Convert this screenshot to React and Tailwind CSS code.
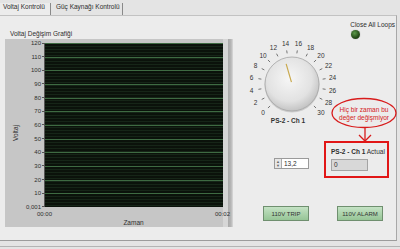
const yLabels = ['120', '110', '100', '90', '80', '70', '60', '50', '40', '30', '20', '10', '0,001']

function Dial() {
  const cx = 52
  const cy = 48
  const marks = []
  for (let v = 0; v <= 30; v += 2) {
    const a = ((-135 + v * 9) * Math.PI) / 180
    const s = Math.sin(a)
    const c = Math.cos(a)
    marks.push(
      <g key={v}>
        <line x1={cx + 31 * s} y1={cy - 31 * c} x2={cx + 34 * s} y2={cy - 34 * c} stroke="#555" strokeWidth="0.8" />
        <text x={cx + 41 * s} y={cy - 41 * c + 2.5} textAnchor="middle" fontSize="6.5" fill="#333">{v}</text>
      </g>
    )
  }
  const pa = ((-135 + 13.2 * 9) * Math.PI) / 180
  return (
    <svg width="110" height="92" viewBox="0 0 110 92">
      <defs>
        <radialGradient id="knob" cx="45%" cy="40%" r="60%">
          <stop offset="0%" stopColor="#f6f6f6" />
          <stop offset="70%" stopColor="#e2e2e2" />
          <stop offset="100%" stopColor="#c4c4c4" />
        </radialGradient>
      </defs>
      {marks}
      <circle cx={cx} cy={cy + 1} r="27.5" fill="#b8b8b8" opacity="0.6" />
      <circle cx={cx} cy={cy} r="27" fill="url(#knob)" stroke="#a6a6a6" strokeWidth="0.8" />
      <line x1={cx + 2 * Math.sin(pa)} y1={cy - 2 * Math.cos(pa)} x2={cx + 21 * Math.sin(pa)} y2={cy - 21 * Math.cos(pa)} stroke="#c9a94e" strokeWidth="1.2" />
      <text x={cx - 4} y="87" textAnchor="middle" fontSize="6.5" fontWeight="bold" fill="#333">PS-2 - Ch 1</text>
    </svg>
  )
}

export default function App() {
  return (
    <div className="relative w-[400px] h-[249px] overflow-hidden bg-[#e4e4e4] font-['Liberation_Sans',Arial,sans-serif] text-[6.5px] leading-[8px] text-[#2e2e2e]">
      {/* tabs */}
      <div className="flex h-[15px] items-end">
        <div className="pl-[3px] pr-[5px] h-[12px] border-r border-[#8a8a8a] bg-[#ececec]">Voltaj Kontrolü</div>
        <div className="pl-[5px] pr-[2px] h-[12px] border-r border-[#8a8a8a]">Güç Kaynağı Kontrolü</div>
      </div>

      {/* panel */}
      <div className="flex h-[226px] border-t border-[#c2c2c2] border-b border-b-[#9c9c9c] border-r border-r-[#a8a8a8] bg-[#ececec] mr-[3px]">
        <div className="w-[235px] pl-[5px] shrink-0">
          <div className="ml-[5px] mt-[14px] h-[8px]">Voltaj Değişim Grafiği</div>
          <div className="mt-[1px] flex w-[228px] h-[188px] bg-[#c6c6c6]">
            <div className="flex w-[39px] shrink-0">
              <div className="w-[24px] flex items-center justify-center">
                <span className="-rotate-90">Voltaj</span>
              </div>
              <div className="flex-1 mt-[4px] h-[164px] flex flex-col justify-between items-end">
                {yLabels.map(l => (
                  <div key={l} className="h-0 flex items-center gap-[1px] text-[6px]">
                    <span>{l}</span>
                    <span className="w-[2px] h-px bg-[#555]" />
                  </div>
                ))}
              </div>
            </div>
            <div className="w-[179px] shrink-0">
              <div className="mt-[4px] h-[164px] bg-[#0b120b] bg-[repeating-linear-gradient(to_bottom,#3e6a42_0_1px,transparent_1px_13.67px),repeating-linear-gradient(to_bottom,#21382480_0_1px,#0b120b_1px_3px)] border-l border-[#555]" />
              <div className="relative z-10 flex justify-between -mx-[7px] mt-[3px] text-[6px]">
                <span>00:00</span>
                <span>00:02</span>
              </div>
              <div className="text-center mt-[1px]">Zaman</div>
            </div>
            <div className="flex-1 bg-[linear-gradient(to_right,#d6d6d6,#d6d6d6_45%,#a9a9a9_50%,#b6b6b6_80%,#dadada)]" />
          </div>
        </div>

        <div className="flex-1 flex flex-col">
          <div className="flex items-start h-[110px]">
            <div className="ml-[5px] mt-[20px]">
              <Dial />
            </div>
            <div className="ml-auto mr-[1px] mt-[5px] flex flex-col items-start whitespace-nowrap">
              <span>Close All Loops</span>
              <span className="ml-[1px] mt-[1px] w-[9px] h-[9px] rounded-full bg-[radial-gradient(circle_at_40%_35%,#5c9a4a,#244a18_60%,#1a3412)] shadow-[0_0_1px_#777]" />
            </div>
          </div>

          <div className="flex items-start mt-[15px]">
            <div className="ml-[39px] mt-[17px] flex h-[11px] w-[35px] border border-[#9a9a9a] bg-white">
              <div className="w-[7px] flex flex-col items-center justify-center bg-[#e6e6e6] border-r border-[#aaa] text-[4px] leading-[4px] text-[#666]">
                <span>▲</span>
                <span>▼</span>
              </div>
              <span className="pl-[2px] leading-[10px]">13,2</span>
            </div>
            <div className="ml-[15px] w-[65px] h-[37px] border-2 border-[#e11616] pl-[5px] pt-[5px]">
              <div className="whitespace-nowrap"><b>PS-2 - Ch 1</b> Actual</div>
              <div className="mt-[3px] w-[37px] h-[12px] bg-[#d8d8d8] border border-[#a4a4a4] pl-[2px] leading-[10px]">0</div>
            </div>
          </div>

          <div className="flex mt-[28px] text-[6px]">
            <div className="ml-[28px] w-[46px] h-[15px] flex items-center justify-center border border-[#6f8f6f] bg-[linear-gradient(to_bottom,#c4e2c4,#96c596)] text-[#333]">110V TRIP</div>
            <div className="ml-[28px] w-[46px] h-[15px] flex items-center justify-center border border-[#6f8f6f] bg-[linear-gradient(to_bottom,#c4e2c4,#96c596)] text-[#333]">110V ALARM</div>
          </div>
        </div>
      </div>
      <div className="mt-[5px] border-t border-[#b4b4b4]" />

      {/* annotation overlay */}
      <div className="absolute left-[330px] top-[97px] w-[68px] h-[46px]">
        <svg width="68" height="46" className="absolute inset-0">
          <ellipse cx="34" cy="16" rx="32" ry="14.5" fill="none" stroke="#d81c1c" strokeWidth="1.3" />
          <line x1="35" y1="30" x2="35" y2="44" stroke="#d81c1c" strokeWidth="1.3" />
          <polyline points="29,38 35,44 41,38" fill="none" stroke="#d81c1c" strokeWidth="1.3" />
        </svg>
        <div className="relative pt-[9px] text-center text-[#d41a1a] text-[6.5px] leading-[8px] whitespace-nowrap">
          <div>Hiç bir zaman bu</div>
          <div>değer değişmiyor</div>
        </div>
      </div>
    </div>
  )
}
